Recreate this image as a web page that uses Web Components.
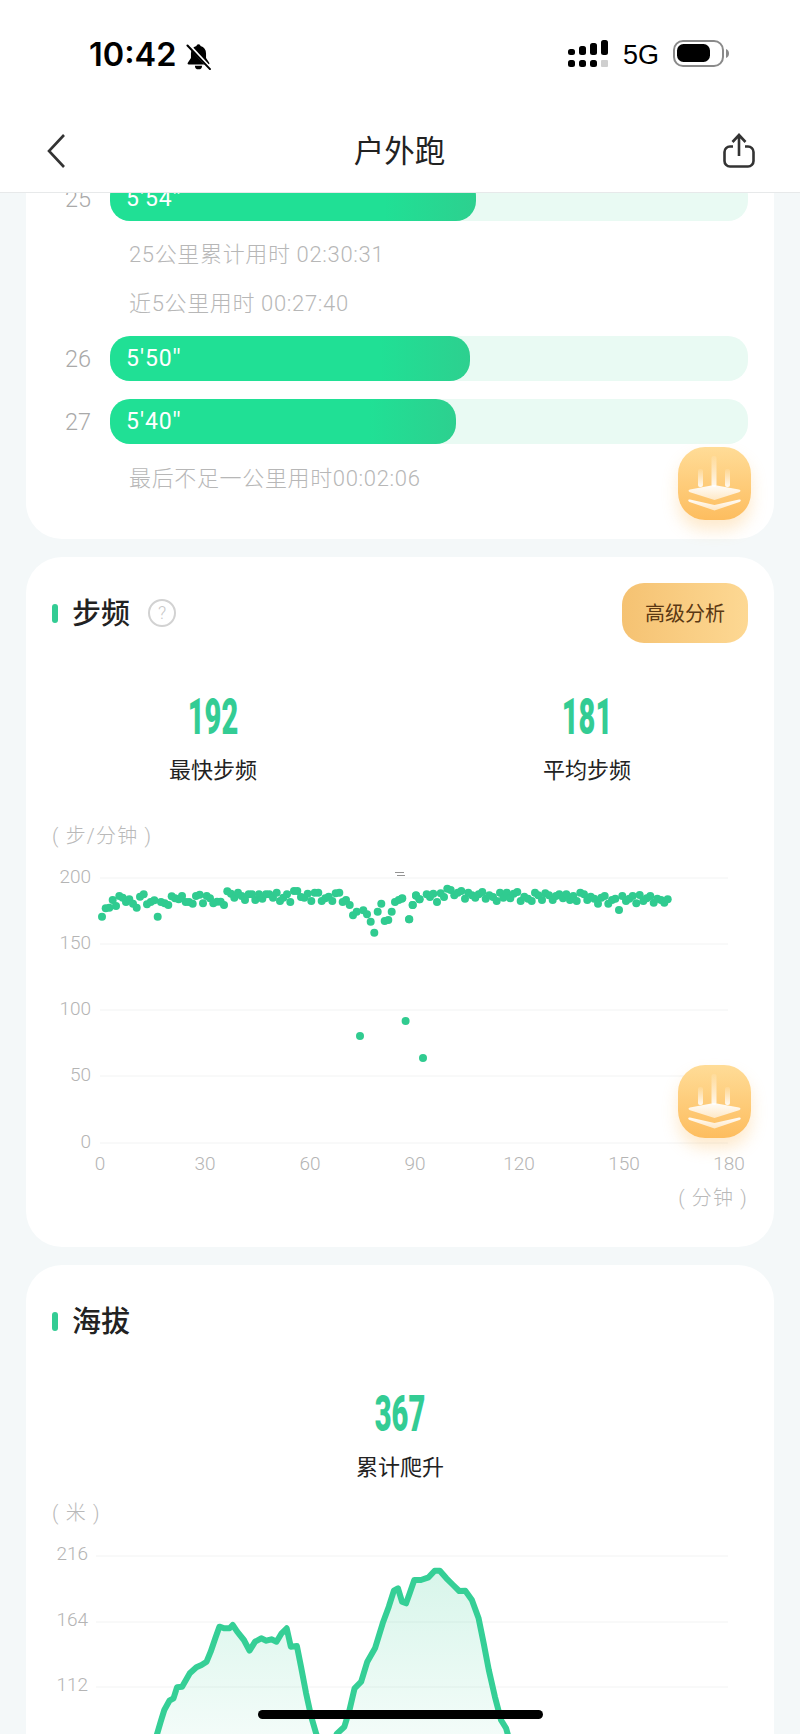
<!DOCTYPE html>
<html lang="zh">
<head>
<meta charset="utf-8">
<title>户外跑</title>
<style>
  html, body { margin: 0; padding: 0; }
  body {
    width: 800px;
    height: 1734px;
    overflow: hidden;
    background: #f4f8f9;
    font-family: Roboto, "Noto Sans CJK SC", sans-serif;
    display: flex;
    flex-direction: column;
  }
  main {
    flex: 1;
    min-height: 0;
    overflow: hidden;
    display: flex;
    flex-direction: column;
    gap: 18px;
    padding: 0 26px;
  }
</style>
</head>
<body>
<status-bar></status-bar>
<nav-bar title="户外跑"></nav-bar>
<main>
  <metric-card flush style="margin-top:-17px;padding-bottom:36px">
    <pace-row km="25" pace="5'54''" width="57.4"></pace-row>
    <split-note style="margin-top:9px">25公里累计用时 02:30:31</split-note>
    <split-note>近5公里用时 00:27:40</split-note>
    <pace-row km="26" pace="5'50''" width="56.4" style="margin-top:8px"></pace-row>
    <pace-row km="27" pace="5'40''" width="54.2" style="margin-top:18px"></pace-row>
    <split-note style="margin-top:10px">最后不足一公里用时00:02:06</split-note>
    <float-button style="bottom:19px"></float-button>
  </metric-card>

  <metric-card heading="步频" help action="高级分析" style="padding-bottom:40px">
    <stat-row style="margin-top:52px">
      <stat-block value="192" label="最快步频"></stat-block>
      <stat-block value="181" label="平均步频"></stat-block>
    </stat-row>
    <unit-label text="( 步/分钟 )" style="margin-top:38px"></unit-label>
    <cadence-chart></cadence-chart>
    <unit-label end text="( 分钟 )"></unit-label>
    <float-button style="bottom:109px"></float-button>
  </metric-card>

  <metric-card heading="海拔" style="padding-bottom:60px">
    <stat-row style="margin-top:41px">
      <stat-block value="367" label="累计爬升"></stat-block>
    </stat-row>
    <unit-label text="( 米 )" style="margin-top:18px"></unit-label>
    <elevation-chart style="margin-top:2px"></elevation-chart>
  </metric-card>
</main>
<home-indicator></home-indicator>

<script>
class StatusBar extends HTMLElement {
    constructor() {
        super();
        const shadow = this.attachShadow({ mode: 'open' });
        shadow.innerHTML = /*html*/`
        <style>
            :host {
                display: flex;
                align-items: center;
                justify-content: space-between;
                height: 110px;
                padding: 0 70px 0 89px;
                box-sizing: border-box;
                background: #fff;
                color: #000;
            }
            .group { display: flex; align-items: center; }
            .time {
                font: 600 32.5px/40px Inter, "Liberation Sans", sans-serif;
            }
            .bell { margin-left: 9px; margin-top: 2px; }
            .net {
                font: 500 27px/32px "Liberation Sans", Inter, sans-serif;
                margin: 2px 14px 0 15px;
            }
            svg { display: block; }
            .right { margin-top: -3px; }
        </style>
        <div class="group">
            <span class="time">10:42</span>
            <svg class="bell" width="27" height="27" viewBox="0 0 24 24">
                <path fill="#000" d="M12 1c-1 0-1.800.7-1.800 1.700C7 3.500 5.300 6 5.300 9.400v4L2.500 17.600c-.5.800 0 1.500.8 1.500h17.400c.8 0 1.300-.7.8-1.500l-2.800-4.200v-4c0-3.400-1.700-5.900-4.900-6.700C13.800 1.700 13 1 12 1z"/>
                <path fill="#000" d="M8.800 20.200a3.200 3.200 0 0 0 6.400 0z"/>
                <path stroke="#fff" stroke-width="3" d="M2.500 1l20 21.500"/>
                <path stroke="#000" stroke-width="1.800" stroke-linecap="round" d="M2.200 2.200l20 21"/>
            </svg>
        </div>
        <div class="group right">
            <svg width="40" height="27" viewBox="0 0 40 27">
                <g fill="#000">
                    <rect x="0" y="9" width="7" height="6" rx="2.500"/>
                    <rect x="11" y="6" width="7" height="9" rx="2.500"/>
                    <rect x="22" y="3" width="7" height="12" rx="2.500"/>
                    <rect x="33" y="0" width="7" height="15" rx="2.500"/>
                    <rect x="0" y="20" width="7" height="7" rx="2.500"/>
                    <rect x="11" y="20" width="7" height="7" rx="2.500"/>
                    <rect x="22" y="20" width="7" height="7" rx="2.500"/>
                </g>
                <rect x="33" y="20" width="7" height="7" rx="1" fill="#cfcfcf"/>
            </svg>
            <span class="net">5G</span>
            <svg width="57" height="27" viewBox="0 0 57 27">
                <rect x="1" y="1" width="49" height="25" rx="9" fill="none" stroke="#8a8a8a" stroke-width="2"/>
                <rect x="4" y="4" width="33" height="18" rx="6.500" fill="#000"/>
                <path fill="#8a8a8a" d="M53 9c2 .6 3 2.400 3 4.500s-1 3.900-3 4.500z"/>
            </svg>
        </div>
        `;
    }
}

class NavBar extends HTMLElement {
    constructor() {
        super();
        const shadow = this.attachShadow({ mode: 'open' });
        shadow.innerHTML = /*html*/`
        <style>
            :host {
                display: grid;
                grid-template-columns: 1fr auto 1fr;
                align-items: center;
                position: relative;
                z-index: 2;
                height: 82px;
                padding: 0 45px 0 47px;
                background: #fff;
                border-bottom: 1px solid #e7e9ea;
            }
            h1 {
                margin: 0 3px 5px 0;
                font: 400 30.5px/40px "Noto Sans CJK SC", sans-serif;
                color: #222;
            }
            svg { display: block; }
            .share { justify-self: end; margin-top: -2px; }
        </style>
        <svg width="18" height="34" viewBox="0 0 18 34">
            <path d="M17 1L2 17l15 16" fill="none" stroke="#333" stroke-width="2.600"/>
        </svg>
        <h1></h1>
        <svg class="share" width="32" height="35" viewBox="0 0 32 35">
            <path d="M10 13.500H7a5.500 5.500 0 0 0-5.500 5.500v9A5.500 5.500 0 0 0 7 33.500h18a5.500 5.500 0 0 0 5.500-5.500v-9a5.500 5.500 0 0 0-5.500-5.500h-3" fill="none" stroke="#333" stroke-width="2.600"/>
            <path d="M16 23V2.500M9.500 9L16 2l6.500 7" fill="none" stroke="#333" stroke-width="2.600"/>
        </svg>
        `;
        shadow.querySelector('h1').textContent = this.getAttribute('title');
    }
}

class MetricCard extends HTMLElement {
    constructor() {
        super();
        const shadow = this.attachShadow({ mode: 'open' });
        const heading = this.getAttribute('heading');
        const action = this.getAttribute('action');
        shadow.innerHTML = /*html*/`
        <style>
            :host {
                display: block;
                position: relative;
                flex: none;
                background: #fff;
                border-radius: 36px;
            }
            :host([flush]) { border-radius: 0 0 36px 36px; }
            header {
                display: flex;
                align-items: center;
                height: 60px;
                padding: 26px 26px 0;
            }
            .mark {
                width: 6px;
                height: 19px;
                border-radius: 3px;
                background: #33cc94;
                margin-right: 14px;
            }
            h2 {
                margin: 0 0 4px;
                font: 500 29px/40px "Noto Sans CJK SC", sans-serif;
                color: #222;
            }
            .help {
                width: 24px;
                height: 24px;
                margin-left: 18px;
                border: 2px solid #d2d2d2;
                border-radius: 50%;
                color: #c8c8c8;
                font: 300 18px/24px Roboto, sans-serif;
                text-align: center;
            }
            button {
                margin-left: auto;
                width: 126px;
                height: 60px;
                padding: 0;
                border: 0;
                border-radius: 22px;
                background: linear-gradient(90deg, #f5c272, #fdd893);
                color: #5a3813;
                font: 400 20px/28px "Noto Sans CJK SC", sans-serif;
            }
        </style>
        ${heading ? `<header>
            <span class="mark"></span>
            <h2>${heading}</h2>
            ${this.hasAttribute('help') ? '<span class="help">?</span>' : ''}
            ${action ? `<button>${action}</button>` : ''}
        </header>` : ''}
        <slot></slot>
        `;
    }
}

class PaceRow extends HTMLElement {
    constructor() {
        super();
        const shadow = this.attachShadow({ mode: 'open' });
        shadow.innerHTML = /*html*/`
        <style>
            :host {
                display: flex;
                align-items: center;
                height: 45px;
                padding: 0 26px 0 39px;
                font-family: Roboto, sans-serif;
            }
            .km {
                width: 45px;
                font-size: 23.5px;
                font-weight: 300;
                color: #a9a9a9;
            }
            .track {
                flex: 1;
                height: 100%;
                border-radius: 20px;
                background: #e9faf3;
            }
            .fill {
                height: 100%;
                box-sizing: border-box;
                padding-left: 16px;
                border-radius: 20px;
                background: linear-gradient(90deg, #20e095 75%, #2dd08f);
                color: #fff;
                font-size: 23px;
                letter-spacing: 1px;
                line-height: 45px;
            }
        </style>
        <span class="km">${this.getAttribute('km')}</span>
        <div class="track">
            <div class="fill" style="width:${this.getAttribute('width')}%">${this.getAttribute('pace')}</div>
        </div>
        `;
    }
}

class SplitNote extends HTMLElement {
    constructor() {
        super();
        const shadow = this.attachShadow({ mode: 'open' });
        shadow.innerHTML = /*html*/`
        <style>
            :host {
                display: block;
                padding-left: 103px;
                color: #b7b7b7;
                font: 300 22px/49px Roboto, "Noto Sans CJK SC", sans-serif;
                letter-spacing: .65px;
            }
        </style>
        <slot></slot>
        `;
    }
}

class StatRow extends HTMLElement {
    constructor() {
        super();
        const shadow = this.attachShadow({ mode: 'open' });
        shadow.innerHTML = /*html*/`
        <style>
            :host {
                display: grid;
                grid-auto-flow: column;
                grid-auto-columns: 1fr;
            }
        </style>
        <slot></slot>
        `;
    }
}

class StatBlock extends HTMLElement {
    constructor() {
        super();
        const shadow = this.attachShadow({ mode: 'open' });
        shadow.innerHTML = /*html*/`
        <style>
            :host { display: block; text-align: center; }
            .value {
                display: block;
                color: #33cc94;
                font: 900 50px/44px Roboto, sans-serif;
                transform: scaleX(.58);
            }
            .label {
                display: block;
                margin-top: 14px;
                color: #222;
                font: 400 22px/30px "Noto Sans CJK SC", sans-serif;
            }
        </style>
        <span class="value">${this.getAttribute('value')}</span>
        <span class="label">${this.getAttribute('label')}</span>
        `;
    }
}

class UnitLabel extends HTMLElement {
    constructor() {
        super();
        const shadow = this.attachShadow({ mode: 'open' });
        shadow.innerHTML = /*html*/`
        <style>
            :host {
                display: block;
                height: 30px;
                padding: 0 26px;
                color: #b9b9b9;
                font: 300 20px/30px Roboto, "Noto Sans CJK SC", sans-serif;
                letter-spacing: 1.2px;
            }
            :host([end]) {
                height: 24px;
                margin-top: 2px;
                text-align: right;
            }
        </style>
        <span>${this.getAttribute('text')}</span>
        `;
    }
}

// page x, y of the dots read off the screenshot, split at x=400 where the two crops meet
const CADENCE_LEFT = [[186,197],[197,172],[208,170],[218,147],[228,165],[238,135],[248,140],[258,153],[268,145],[279,158],[290,170],[300,137],[311,130],[321,160],[332,153],[343,148],[353,197],[363,153],[374,157],[385,162],[395,136],[405,142],[416,145],[426,135],[437,153],[447,153],[458,158],[468,135],[479,131],[489,157],[500,135],[510,142],[520,157],[531,152],[542,152],[552,162],[562,121],[573,128],[583,140],[594,125],[605,135],[615,147],[626,130],[636,130],[646,147],[657,130],[667,143],[678,130],[688,130],[699,140],[710,125],[720,150],[730,140],[741,130],[751,153],[762,120],[772,120],[783,138],[793,140],[803,128],[814,150],[824,125],[835,125],[845,150],[856,142],[866,137],[877,150],[887,127],[898,125],[908,153],[918,147],[929,162],[939,193],[950,182],[970,178],[981,190],[992,212],[1003,245],[1013,182],[1024,158],[1034,210],[1045,207],[1055,182],[1065,153],[1076,147],[1087,142],[1107,205],[1118,162],[1128,134],[1139,145]];
const CADENCE_RIGHT = [[5,143],[28,205],[38,162],[48,133],[58,145],[80,130],[90,138],[100,128],[111,153],[122,127],[132,138],[142,113],[152,117],[163,133],[173,125],[184,120],[195,143],[205,125],[216,133],[226,140],[236,130],[247,123],[257,143],[268,133],[279,138],[290,150],[300,125],[310,140],[320,125],[331,142],[341,128],[352,123],[362,150],[373,137],[384,143],[395,150],[405,125],[415,133],[426,147],[436,127],[447,133],[458,147],[468,135],[478,130],[489,142],[499,130],[510,147],[520,135],[530,150],[541,125],[552,130],[562,147],[572,137],[583,143],[594,158],[604,140],[614,135],[625,158],[636,147],[646,143],[657,177],[667,135],[678,150],[688,143],[698,135],[709,157],[719,132],[730,150],[740,142],[751,135],[761,155],[772,143],[783,147],[793,155],[803,145]];
const CADENCE_LOW = [[334,185],[379.6,170],[397,207]];

const ELEVATION_A = [[296,1480],[308,1422],[315,1385],[322,1350],[332,1322],[340,1315],[347,1282],[357,1280],[372,1240],[385,1222],[395,1215],[405,1205],[413,1175],[422,1135],[430,1100],[440,1105],[450,1105],[456,1095],[465,1115],[478,1140],[489,1172],[500,1145],[512,1135],[522,1142],[532,1138],[542,1145],[552,1120],[562,1105],[570,1160],[582,1158],[590,1220],[600,1300],[610,1370],[620,1422],[632,1480]];
const ELEVATION_B = [[645,1480],[660,1422],[675,1400],[685,1350],[695,1285],[708,1265],[720,1205],[735,1165],[750,1090],[762,1040],[772,992],[780,985],[788,1025],[796,1030],[803,1000],[812,960],[825,960],[840,952],[852,932],[862,932],[875,955],[888,975],[900,993],[912,992],[925,1020],[938,1075],[948,1150],[958,1230],[970,1310],[982,1380],[992,1405],[995,1422],[1005,1480]];

const CHART_STYLE = /*css*/`
    :host { display: block; }
    svg { display: block; }
    text {
        font: 300 19px Roboto, sans-serif;
        fill: #b4b4b4;
    }
`;

class CadenceChart extends HTMLElement {
    constructor() {
        super();
        const shadow = this.attachShadow({ mode: 'open' });
        const ticks = [[200, 27], [150, 93], [100, 159], [50, 225], [0, 292]];
        const xTicks = [[0, 74], [30, 179], [60, 284], [90, 389], [120, 493], [150, 598], [180, 703]];
        const dots = [
            ...CADENCE_LEFT.map(([x, y]) => [14 + x / 3, y / 3]),
            ...CADENCE_RIGHT.map(([x, y]) => [374 + x / 3, y / 3]),
            ...CADENCE_LOW,
        ];
        shadow.innerHTML = /*html*/`
        <style>${CHART_STYLE}</style>
        <svg width="748" height="330" viewBox="0 0 748 330">
            ${ticks.map(([v, y]) => `
                <line x1="74" x2="702" y1="${y}" y2="${y}" stroke="#f2f3f3"/>
                <text x="65" y="${y + 5}" text-anchor="end">${v}</text>
            `).join('')}
            ${xTicks.map(([v, x]) => `<text x="${x}" y="319" text-anchor="middle">${v}</text>`).join('')}
            <clipPath id="plot"><rect x="66" y="0" width="640" height="292"/></clipPath>
            <g clip-path="url(#plot)" fill="#30cb90">
                ${dots.map(([x, y]) => `<circle cx="${x.toFixed(1)}" cy="${y.toFixed(1)}" r="4"/>`).join('')}
            </g>
            <path d="M369 21.500h9M371 24.500h8" stroke="#777" stroke-width=".8"/>
        </svg>
        `;
    }
}

class ElevationChart extends HTMLElement {
    constructor() {
        super();
        const shadow = this.attachShadow({ mode: 'open' });
        const ticks = [[216, 26], [164, 92], [112, 157]];
        const toSvg = ([x, y]) => `${(x / 1.96 - 26).toFixed(1)},${(y / 3 - 270).toFixed(1)}`;
        const peak = (points, id) => {
            const line = points.map(toSvg).join(' ');
            return `<polygon points="${line}" fill="url(#${id})"/>
                <polyline points="${line}" fill="none" stroke="#35cf96" stroke-width="6" stroke-linejoin="round" stroke-linecap="round"/>`;
        };
        shadow.innerHTML = /*html*/`
        <style>${CHART_STYLE}</style>
        <svg width="748" height="224" viewBox="0 0 748 224">
            <defs>
                <linearGradient id="shade" gradientUnits="userSpaceOnUse" x1="0" y1="30" x2="0" y2="204">
                    <stop offset="0" stop-color="#33cc94" stop-opacity=".2"/>
                    <stop offset="1" stop-color="#33cc94" stop-opacity=".06"/>
                </linearGradient>
            </defs>
            ${ticks.map(([v, y]) => `
                <line x1="70" x2="702" y1="${y}" y2="${y}" stroke="#f2f3f3"/>
                <text x="62" y="${y + 4}" text-anchor="end">${v}</text>
            `).join('')}
            ${peak(ELEVATION_A, 'shade')}
            ${peak(ELEVATION_B, 'shade')}
        </svg>
        `;
    }
}

class FloatButton extends HTMLElement {
    constructor() {
        super();
        const shadow = this.attachShadow({ mode: 'open' });
        shadow.innerHTML = /*html*/`
        <style>
            :host {
                display: block;
                position: absolute;
                right: 23px;
                width: 73px;
                height: 73px;
                border-radius: 27px;
                background: linear-gradient(180deg, #ffdc97, #fdbd5f);
                box-shadow: 0 10px 16px rgba(253, 190, 100, .32);
            }
            svg { display: block; }
        </style>
        <svg width="73" height="73" viewBox="0 0 73 73">
            <defs>
                <linearGradient id="bar" x1="0" y1="0" x2="0" y2="1">
                    <stop offset="0" stop-color="#fff" stop-opacity=".1"/>
                    <stop offset="1" stop-color="#fff" stop-opacity=".9"/>
                </linearGradient>
                <linearGradient id="layer" x1="0" y1="0" x2="0" y2="1">
                    <stop offset="0" stop-color="#fff" stop-opacity=".95"/>
                    <stop offset="1" stop-color="#fff" stop-opacity=".6"/>
                </linearGradient>
            </defs>
            <rect x="33.500" y="9" width="5" height="31" rx="2" fill="url(#bar)"/>
            <rect x="20" y="22" width="5" height="18" rx="2" fill="url(#bar)"/>
            <rect x="47" y="22" width="5" height="18" rx="2" fill="url(#bar)"/>
            <path d="M12 42.500L36 38l25 4.500c2 .5 2 2 0 2.700L36.500 53 12 45.200c-2-.7-2-2.200 0-2.700z" fill="url(#layer)"/>
            <path d="M12 52.500L36.500 58 61 52.500c2-.4 2.500 1.500 .5 2.500L36.500 63.500 11.500 55c-2-1-1.500-2.900.5-2.500z" fill="url(#layer)"/>
        </svg>
        `;
    }
}

class HomeIndicator extends HTMLElement {
    constructor() {
        super();
        const shadow = this.attachShadow({ mode: 'open' });
        shadow.innerHTML = /*html*/`
        <style>
            :host {
                display: block;
                position: fixed;
                left: 258px;
                top: 1710px;
                width: 285px;
                height: 9px;
                border-radius: 5px;
                background: #000;
            }
        </style>
        `;
    }
}

customElements.define('status-bar', StatusBar);
customElements.define('nav-bar', NavBar);
customElements.define('metric-card', MetricCard);
customElements.define('pace-row', PaceRow);
customElements.define('split-note', SplitNote);
customElements.define('stat-row', StatRow);
customElements.define('stat-block', StatBlock);
customElements.define('unit-label', UnitLabel);
customElements.define('cadence-chart', CadenceChart);
customElements.define('elevation-chart', ElevationChart);
customElements.define('float-button', FloatButton);
customElements.define('home-indicator', HomeIndicator);
</script>
</body>
</html>
